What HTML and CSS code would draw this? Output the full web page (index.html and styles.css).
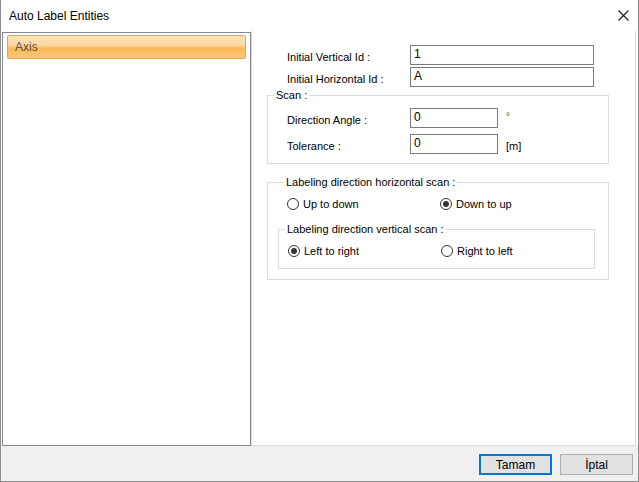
FILE: index.html
```html
<!DOCTYPE html>
<html>
<head>
<meta charset="utf-8">
<link rel="stylesheet" href="styles.css">
</head>
<body>
<div class="dialog">
  <div class="titlebar">
    <span class="title">Auto Label Entities</span>
    <svg class="close" width="11" height="11" viewBox="0 0 11 11"><path d="M0.5 0.5 L10.5 10.5 M10.5 0.5 L0.5 10.5" stroke="#1a1a1a" stroke-width="1.1" fill="none"/></svg>
  </div>
  <div class="body">
    <div class="list">
      <div class="item">Axis</div>
    </div>
    <div class="panel">
      <div class="idrows">
        <label class="lbl">Initial Vertical Id :</label>
        <div class="input wide">1</div>
        <label class="lbl">Initial Horizontal Id :</label>
        <div class="input wide">A</div>
      </div>
      <fieldset class="group scan">
        <legend>Scan :</legend>
        <div class="scanrows">
          <label class="lbl">Direction Angle :</label>
          <div class="input short">0</div>
          <span class="unit deg">°</span>
          <label class="lbl">Tolerance :</label>
          <div class="input short">0</div>
          <span class="unit">[m]</span>
        </div>
      </fieldset>
      <fieldset class="group horiz">
        <legend>Labeling direction horizontal scan :</legend>
        <div class="radios outer">
          <div class="radio"><span class="circle"></span>Up to down</div>
          <div class="radio"><span class="circle on"></span>Down to up</div>
        </div>
        <fieldset class="group vert">
          <legend>Labeling direction vertical scan :</legend>
          <div class="radios inner">
            <div class="radio"><span class="circle on"></span>Left to right</div>
            <div class="radio"><span class="circle"></span>Right to left</div>
          </div>
        </fieldset>
      </fieldset>
    </div>
  </div>
  <div class="footer">
    <button class="btn default">Tamam</button>
    <button class="btn">İptal</button>
  </div>
</div>
</body>
</html>
```
FILE: styles.css
```css
* { box-sizing: border-box; }
html, body { margin: 0; padding: 0; }
body {
  width: 639px;
  height: 482px;
  font-family: "Liberation Sans", Arial, sans-serif;
  font-size: 11px;
  color: #000;
  background: #fff;
}
.dialog {
  width: 639px;
  height: 482px;
  border: 1px solid #8c8c8c;
  border-top: none;
  display: flex;
  flex-direction: column;
  background: #fff;
}
.titlebar {
  height: 31px;
  flex: none;
  display: flex;
  align-items: center;
  justify-content: space-between;
  padding: 0 9px 0 8px;
}
.title {
  font-size: 12px;
  color: #000;
}
.close { margin-top: -1px; }
.body {
  height: 415px;
  flex: none;
  display: flex;
  padding-left: 1px;
}
.list {
  width: 249px;
  margin-top: 1px;
  height: 414px;
  border: 1px solid #828790;
  background: #fff;
  padding: 2px 4px 0 4px;
}
.item {
  height: 24px;
  border: 1px solid #e3a64f;
  border-radius: 2px;
  background: linear-gradient(to bottom, #fde3bd 0%, #fcd49b 45%, #f9b957 55%, #fbc877 100%);
  color: #5e5040;
  font-size: 12px;
  line-height: 22px;
  padding-left: 7px;
}
.panel {
  width: 385px;
  height: 415px;
  border: 1px solid #dcdcdc;
  border-top: none;
  padding: 14px 0 0 15px;
  background: #fff;
}
.idrows {
  display: grid;
  grid-template-columns: 123px 184px;
  row-gap: 2px;
  padding-left: 20px;
}
.lbl {
  height: 20px;
  padding-top: 5px;
  line-height: 14px;
}
.input {
  height: 20px;
  border: 1px solid #7a7a7a;
  background: #fff;
  font-size: 12px;
  line-height: 17px;
  padding-left: 3px;
}
.input.wide { width: 184px; }
.input.short { width: 88px; }
fieldset.group {
  margin: 0;
  border: 1px solid #dcdcdc;
  padding: 0;
  min-width: 0;
}
fieldset.group legend {
  margin-left: 6px;
  padding: 0 2px;
  line-height: 13px;
  font-size: 11px;
}
.scan {
  width: 342px;
  margin-top: 2px !important;
  padding: 6px 0 9px 0 !important;
}
.scanrows {
  display: grid;
  grid-template-columns: 123px 88px auto;
  row-gap: 6px;
  padding-left: 19px;
}
.unit { padding-left: 8px; line-height: 14px; padding-top: 5px; }
.unit.deg { font-size: 10px; color: #555; padding-top: 2px; }
.horiz {
  width: 342px;
  margin-top: 12px !important;
  padding: 7px 0 10px 10px !important;
}
.radios {
  display: flex;
  height: 16px;
  align-items: center;
  padding-left: 9px;
}
.radio {
  width: 153px;
  display: flex;
  align-items: center;
  gap: 4px;
}
.circle {
  width: 12px;
  height: 12px;
  border: 1px solid #333;
  border-radius: 50%;
  background: #fff;
  position: relative;
  flex: none;
}
.circle.on::after {
  content: "";
  position: absolute;
  left: 2px;
  top: 2px;
  width: 6px;
  height: 6px;
  border-radius: 50%;
  background: #333;
}
.vert {
  width: 317px;
  margin-top: 11px !important;
  padding: 7px 0 9px 0 !important;
}
.footer {
  flex: 1;
  background: #f0f0f0;
  display: flex;
  justify-content: flex-end;
  align-items: flex-start;
  gap: 8px;
  padding: 8px 5px 0 0;
}
.btn {
  width: 73px;
  height: 21px;
  border: 1px solid #adadad;
  background: #e1e1e1;
  font-family: "Liberation Sans", Arial, sans-serif;
  font-size: 12px;
  color: #000;
  padding: 0;
  margin: 0;
}
.btn.default { border: 2px solid #0078d7; }
```
